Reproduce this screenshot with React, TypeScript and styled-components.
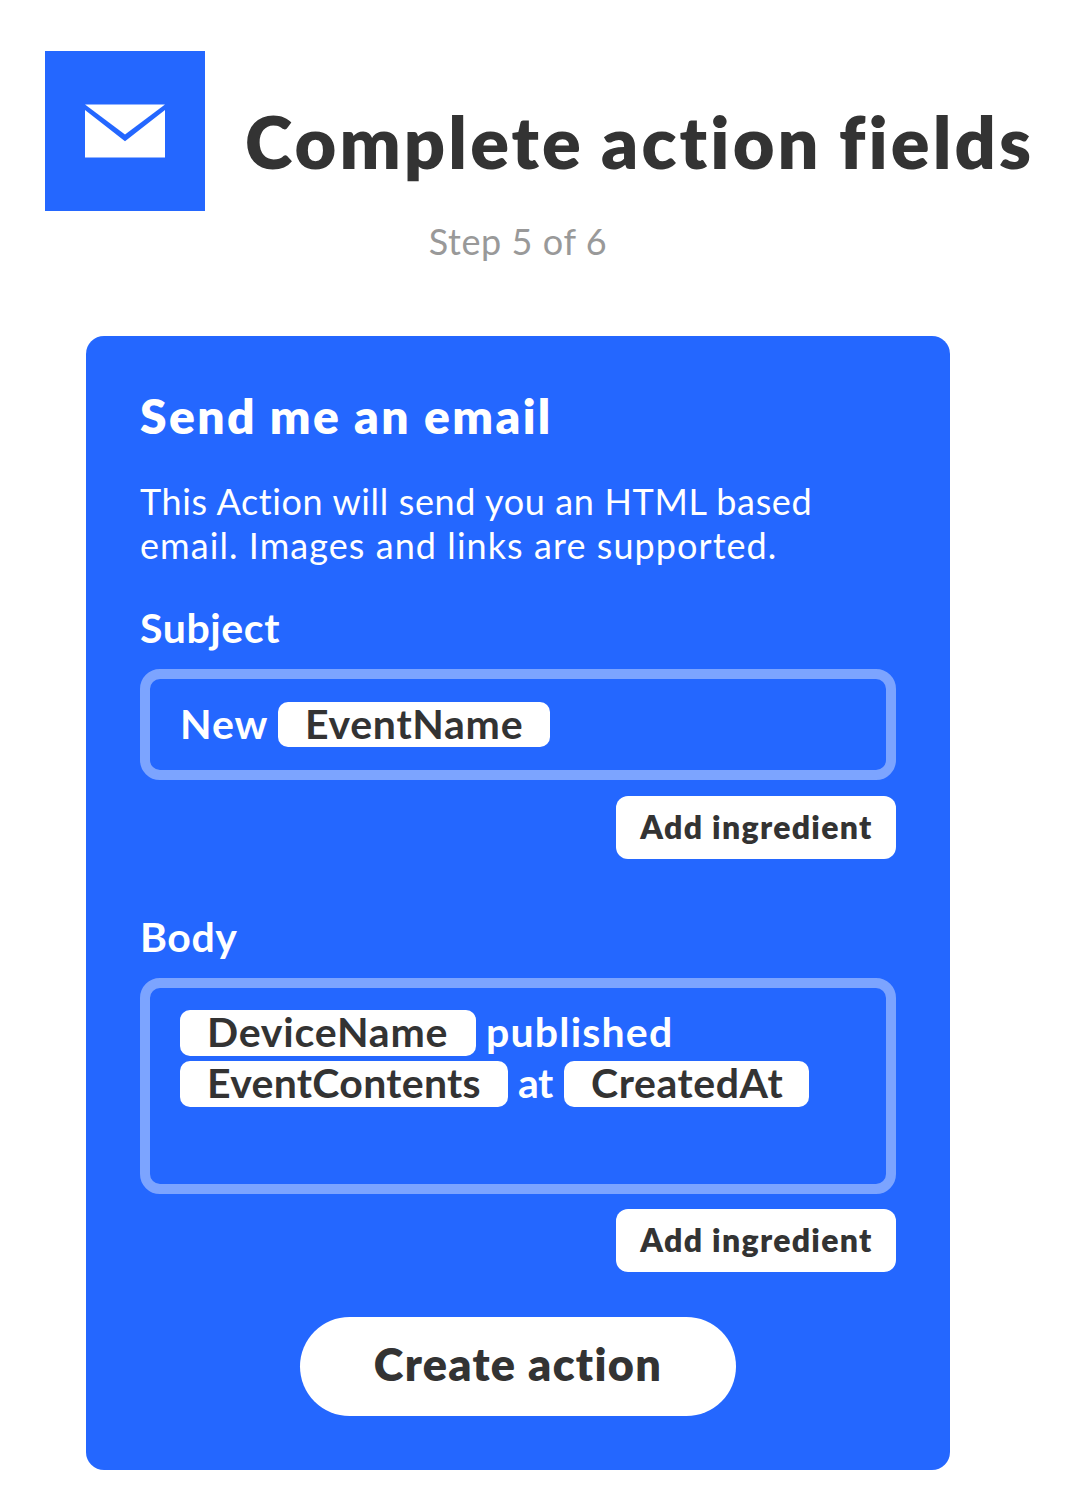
import React from 'react';
import styled, { createGlobalStyle } from 'styled-components';

const BLUE = '#2467ff';
const INK = '#333333';

const GlobalStyle = createGlobalStyle`
  body {
    margin: 0;
    background: #ffffff;
    color: ${INK};
    font-family: Lato, 'Open Sans', sans-serif;
  }
  *, *::before, *::after { box-sizing: border-box; }
`;

const Page = styled.main`
  width: 1074px;
  height: 1512px;
  padding-top: 51px;
  overflow: hidden;
`;

const Header = styled.header`
  display: flex;
  align-items: flex-start;
  gap: 40px;
  padding-left: 45px;
`;

const ServiceTile = styled.div`
  display: flex;
  align-items: center;
  justify-content: center;
  flex: none;
  width: 160px;
  height: 160px;
  background: ${BLUE};
`;

const Title = styled.h1`
  margin: 46px 0 0;
  font-size: 72px;
  font-weight: 800;
  line-height: 88px;
  letter-spacing: 3.1px;
  word-spacing: -2.5px;
  white-space: nowrap;
`;

const Step = styled.p`
  width: 864px;
  margin: 8px 0 0 86px;
  color: #999999;
  font-size: 36px;
  line-height: 44px;
  letter-spacing: 0.6px;
  text-align: center;
`;

const Card = styled.section`
  display: flex;
  flex-direction: column;
  width: 864px;
  height: 1134px;
  margin: 73px 0 0 86px;
  padding: 52px 54px 54px;
  border-radius: 18px;
  background: ${BLUE};
  color: #ffffff;
`;

const CardTitle = styled.h2`
  margin: 0;
  font-size: 48px;
  font-weight: 800;
  line-height: 56px;
  letter-spacing: 2.4px;
  word-spacing: -0.7px;
`;

const Description = styled.p`
  margin: 35px 0 0;
  font-size: 36px;
  line-height: 44px;
`;

const DescriptionLine = styled.span<{ $track: number }>`
  display: block;
  letter-spacing: ${(p) => p.$track}px;
  white-space: nowrap;
`;

const Field = styled.div<{ $top: number }>`
  display: flex;
  flex-direction: column;
  margin-top: ${(p) => p.$top}px;
`;

const Label = styled.label<{ $track: number }>`
  font-size: 41px;
  font-weight: 700;
  line-height: 50px;
  letter-spacing: ${(p) => p.$track}px;
`;

const InputBox = styled.div<{ $height: number; $inset: number }>`
  display: flex;
  flex-direction: column;
  gap: 5px;
  height: ${(p) => p.$height}px;
  margin-top: 16px;
  padding: ${(p) => p.$inset}px 30px 0;
  border: 10px solid #7ca4ff;
  border-radius: 20px;
`;

const Line = styled.div`
  display: flex;
  align-items: flex-start;
  gap: 10px;
  font-size: 41px;
  font-weight: 700;
  line-height: 44px;
  white-space: nowrap;
`;

const Word = styled.span<{ $track: number; $width?: number }>`
  width: ${(p) => (p.$width ? `${p.$width}px` : 'auto')};
  letter-spacing: ${(p) => p.$track}px;
`;

const Ingredient = styled.span<{ $track: number; $width: number; $height?: number }>`
  width: ${(p) => p.$width}px;
  height: ${(p) => p.$height ?? 46}px;
  padding-left: 27px;
  border-radius: 10px;
  background: #ffffff;
  color: ${INK};
  letter-spacing: ${(p) => p.$track}px;
`;

const Button = styled.button`
  border: 0;
  background: #ffffff;
  color: ${INK};
  font-family: inherit;
  font-weight: 800;
  text-align: center;
  white-space: nowrap;
`;

const AddButton = styled(Button)<{ $top: number }>`
  align-self: flex-end;
  width: 280px;
  height: 63px;
  margin-top: ${(p) => p.$top}px;
  padding: 0 0 2px 1px;
  border-radius: 12px;
  font-size: 32px;
  line-height: 61px;
  letter-spacing: 1.3px;
`;

const CreateButton = styled(Button)`
  align-self: center;
  width: 436px;
  height: 99px;
  margin-top: 45px;
  padding: 0 0 4px;
  border-radius: 50px;
  font-size: 45px;
  line-height: 95px;
  letter-spacing: 1.3px;
`;

function Envelope() {
  return (
    <svg width="80" height="54" viewBox="0 0 80 54" fill="#ffffff" aria-hidden="true">
      <path d="M0 0.4H80L40 30.4Z" />
      <path d="M0 6L40 37.2L80 6V53.6H0Z" />
    </svg>
  );
}

export default function App() {
  return (
    <>
      <GlobalStyle />
      <Page>
        <Header>
          <ServiceTile>
            <Envelope />
          </ServiceTile>
          <Title>Complete action fields</Title>
        </Header>
        <Step>Step 5 of 6</Step>
        <Card>
          <CardTitle>Send me an email</CardTitle>
          <Description>
            <DescriptionLine $track={0.63}>This Action will send you an HTML based</DescriptionLine>
            <DescriptionLine $track={1.06}>email. Images and links are supported.</DescriptionLine>
          </Description>
          <Field $top={36}>
            <Label $track={0.6}>Subject</Label>
            <InputBox $height={111} $inset={23}>
              <Line>
                <Word $track={1} $width={88}>New</Word>
                <Ingredient $track={0.7} $width={272} $height={45}>EventName</Ingredient>
              </Line>
            </InputBox>
            <AddButton $top={16}>Add ingredient</AddButton>
          </Field>
          <Field $top={53}>
            <Label $track={0.6}>Body</Label>
            <InputBox $height={216} $inset={22}>
              <Line>
                <Ingredient $track={0.8} $width={296}>DeviceName</Ingredient>
                <Word $track={1.2}>published</Word>
              </Line>
              <Line>
                <Ingredient $track={0.3} $width={328}>EventContents</Ingredient>
                <Word $track={-0.5} $width={36}>at</Word>
                <Ingredient $track={0.6} $width={245}>CreatedAt</Ingredient>
              </Line>
            </InputBox>
            <AddButton $top={15}>Add ingredient</AddButton>
          </Field>
          <CreateButton>Create action</CreateButton>
        </Card>
      </Page>
    </>
  );
}
